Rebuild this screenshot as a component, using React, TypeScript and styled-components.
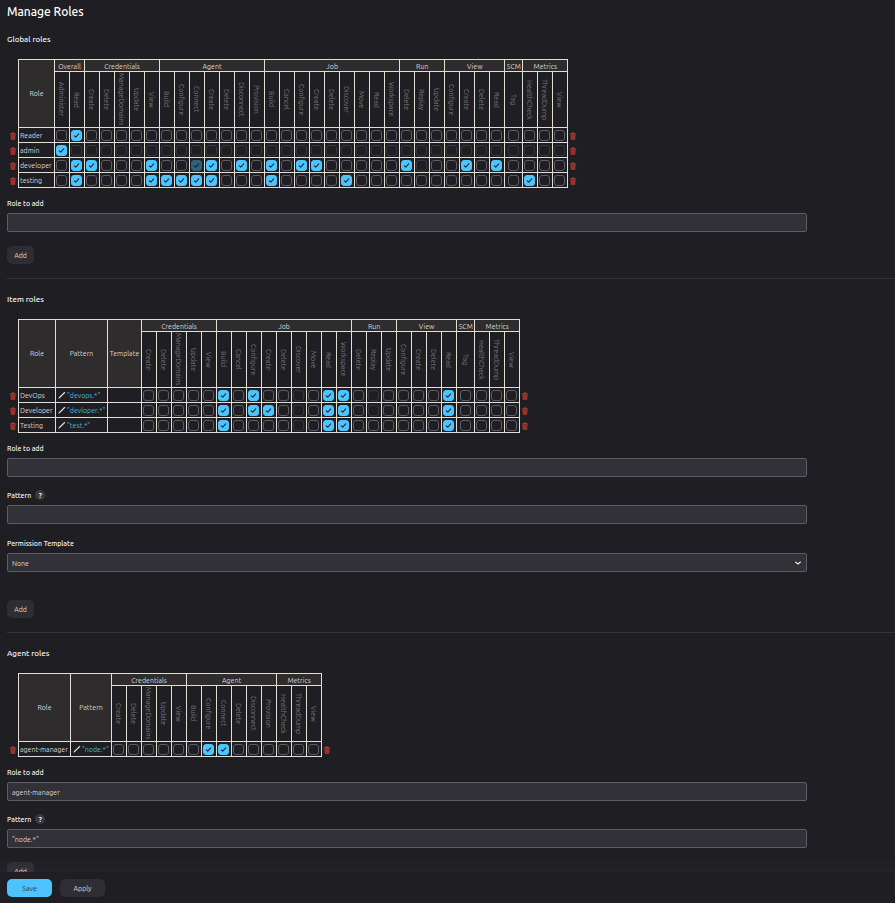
import React, { Fragment, useState } from "react";
import styled, { createGlobalStyle } from "styled-components";

const GlobalStyle = createGlobalStyle`
  *, *::before, *::after { box-sizing: border-box; }
  body {
    margin: 0;
    background: #1f1e23;
    color: #d6d6d6;
    font-family: Ubuntu, "Noto Sans", sans-serif;
    font-size: 7px;
    line-height: 10px;
  }
  button, input, select { font: inherit; color: inherit; margin: 0; }
`;

const Page = styled.div`
  height: 100vh;
  display: flex;
  flex-direction: column;
  overflow: hidden;
`;

const Content = styled.main`
  flex: 1;
  min-height: 0;
  overflow: hidden;
  padding: 4px 0 0 7px;
`;

const Title = styled.h1`
  margin: 0 0 15px;
  font-size: 12px;
  line-height: 16px;
  font-weight: 500;
  color: #fff;
`;

const Section = styled.section`
  & + & {
    margin-top: 14px;
    padding-top: 16px;
    border-top: 1px solid #35343a;
  }
`;

const SectionTitle = styled.h2`
  margin: 0 0 14px;
  font-size: 8px;
  line-height: 10px;
  font-weight: 500;
  color: #f0f0f0;
`;

const RoleTable = styled.table`
  table-layout: fixed;
  width: min-content;
  border-collapse: separate;
  border-spacing: 0;
  white-space: nowrap;
`;

const Col = styled.col<{ $width: number }>`
  width: ${(p) => p.$width}px;
`;

const SideCell = styled.td<{ $ruled?: boolean }>`
  padding: 0;
  border-right: ${(p) => (p.$ruled ? "1px solid #dfdfd3" : "0")};
  padding-left: ${(p) => (p.$ruled ? "1px" : "0")};
`;

const HeadCell = styled.th`
  height: 56px;
  padding: 0 0 2px;
  background: #2e2c2c;
  border: solid #dfdfd3;
  border-width: 1px 1px 1px 0;
  font-weight: 400;
`;

const GroupCell = styled(HeadCell)`
  height: 13px;
  padding-bottom: 0;
  line-height: 10px;
`;

const PermissionCell = styled.th`
  height: 56px;
  padding: 0;
  border: solid #dfdfd3;
  border-width: 0 1px 1px 0;
  font-weight: 400;
  color: #777678;
`;

const VerticalText = styled.span`
  display: block;
  margin: 0 auto;
  writing-mode: vertical-rl;
  line-height: 14px;
  text-align: center;
`;

const BodyCell = styled.td`
  height: 15px;
  padding: 0;
  border: solid #dfdfd3;
  border-width: 0 1px 1px 0;
`;

const NameCell = styled(BodyCell).attrs({ as: "th", scope: "row" })`
  padding-left: 1px;
  text-align: left;
  font-weight: 400;
`;

const TickCell = styled(BodyCell)`
  padding-right: 1px;
`;

const PatternLine = styled.div`
  display: flex;
  align-items: center;
  gap: 1px;
  padding-left: 2px;
`;

const PatternLink = styled.a`
  color: #45b8d8;
  text-decoration: none;
`;

const Tick = styled.input`
  appearance: none;
  display: block;
  width: 11px;
  height: 11px;
  border: 1px solid #5d5b66;
  border-radius: 3px;
  background: transparent center / 11px 11px no-repeat;

  ${TickCell} > & { margin: 0 auto; }

  &:checked {
    border-color: #4dc3ff;
    background-color: #4dc3ff;
    background-image: url("data:image/svg+xml,%3Csvg xmlns='http://www.w3.org/2000/svg' viewBox='0 0 11 11' fill='none' stroke='%231f2a33' stroke-width='1.1' stroke-linecap='round' stroke-linejoin='round'%3E%3Cpath d='M3.3 5.8 4.8 7.2 7.7 3.9'/%3E%3C/svg%3E");
    background-origin: border-box;
  }
  &:disabled { opacity: 0.4; }
`;

const IconButton = styled.button`
  display: flex;
  width: 10px;
  height: 10px;
  padding: 0;
  align-items: center;
  justify-content: center;
  border: 0;
  background: none;
`;

const Field = styled.div<{ $gap: number }>`
  max-width: 800px;
  margin-top: ${(p) => p.$gap}px;
`;

const LabelRow = styled.div`
  display: flex;
  align-items: center;
  gap: 4px;
  height: 10px;
  margin-bottom: 5px;
  font-weight: 500;
  color: #f0f0f0;
`;

const Help = styled.button`
  width: 10px;
  height: 10px;
  padding: 0;
  border: 0;
  border-radius: 5px;
  background: #3a393f;
  font-weight: 700;
  line-height: 10px;
`;

const TextBox = styled.input`
  display: block;
  width: 100%;
  height: 19px;
  padding: 0 4px;
  border: 1px solid #5d5b66;
  border-radius: 2px;
  background: #323137;
`;

const SelectWrap = styled.div`
  display: grid;
  align-items: center;
  & > * { grid-area: 1 / 1; }
  & > svg { justify-self: end; margin-right: 5px; pointer-events: none; }
`;

const Select = styled.select`
  appearance: none;
  width: 100%;
  height: 19px;
  padding: 0 4px;
  border: 1px solid #5d5b66;
  border-radius: 2px;
  background: #323137;
`;

const Button = styled.button<{ $primary?: boolean; $wide?: boolean }>`
  display: block;
  height: 18px;
  padding: 0;
  width: ${(p) => (p.$wide ? 45 : 27)}px;
  border: 0;
  border-radius: 5px;
  background: ${(p) => (p.$primary ? "#4dc3ff" : "#2e2d33")};
  color: ${(p) => (p.$primary ? "#1f3a4a" : "#d6d6d6")};
`;

const AddRow = styled.div<{ $gap: number }>`
  margin-top: ${(p) => p.$gap}px;
`;

const Footer = styled.footer`
  position: relative;
  flex: none;
  display: flex;
  gap: 8px;
  height: 31px;
  padding: 7px;
  background: #1f1e23;

  &::before {
    content: "";
    position: absolute;
    inset: -16px 0 100%;
    background: linear-gradient(transparent, rgba(255, 255, 255, 0.02));
    pointer-events: none;
  }
`;

const Trash = () => (
  <svg width="8" height="8" viewBox="0 0 16 16">
    <path d="M1.5 3.2h3.3l.8-2h4.8l.8 2h3.3v1.7H1.5z" fill="#b83a32" />
    <path d="M2.6 5h10.8l-1 10.8H3.6z" fill="#922e2b" />
    <path d="M5.6 6.6l.4 7M10.4 6.6l-.4 7" stroke="#b83a32" strokeWidth="1" />
  </svg>
);

const Pencil = () => (
  <svg width="8" height="8" viewBox="0 0 16 16">
    <path d="M.8 15.4l1-3L12.9 1.6l1.7 1.7L3.8 14.2z" fill="#dedede" />
  </svg>
);

const Chevron = () => (
  <svg width="8" height="8" viewBox="0 0 16 16" fill="none" stroke="#eee" strokeWidth="2.1" strokeLinecap="round" strokeLinejoin="round">
    <path d="M3 6 8 10l5-4" />
  </svg>
);

type Group = { name: string; items: string[] };
type Role = { name: string; pattern?: string; on: number[]; off?: number[] };

const job = ["Build", "Cancel", "Configure", "Create", "Delete", "Discover", "Move", "Read", "Workspace"];
const credentials: Group = { name: "Credentials", items: ["Create", "Delete", "ManageDomains", "Update", "View"] };
const metrics: Group = { name: "Metrics", items: ["HealthCheck", "ThreadDump", "View"] };
const shared: Group[] = [
  { name: "Job", items: job },
  { name: "Run", items: ["Delete", "Replay", "Update"] },
  { name: "View", items: ["Configure", "Create", "Delete", "Read"] },
  { name: "SCM", items: ["Tag"] },
  metrics,
];

const globalGroups: Group[] = [
  { name: "Overall", items: ["Administer", "Read"] },
  credentials,
  { name: "Agent", items: ["Build", "Configure", "Connect", "Create", "Delete", "Disconnect", "Provision"] },
  ...shared,
];
const itemGroups: Group[] = [credentials, ...shared];
const agentGroups: Group[] = [
  credentials,
  { name: "Agent", items: ["Build", "Configure", "Connect", "Delete", "Disconnect", "Provision"] },
  metrics,
];

const globalRoles: Role[] = [
  { name: "Reader", on: [1] },
  { name: "admin", on: [0], off: Array.from({ length: 33 }, (_, i) => i + 1) },
  { name: "developer", on: [1, 2, 6, 9, 10, 12, 14, 16, 17, 23, 27, 29], off: [9, 24] },
  { name: "testing", on: [1, 6, 7, 8, 9, 10, 14, 19, 31] },
];
const itemRoles: Role[] = [
  { name: "DevOps", pattern: "devops.*", on: [5, 7, 12, 13, 20], off: [10, 15] },
  { name: "Developer", pattern: "devloper.*", on: [5, 7, 8, 12, 13, 20], off: [10, 15] },
  { name: "Testing", pattern: "test.*", on: [5, 12, 13, 20], off: [10] },
];
const agentRoles: Role[] = [{ name: "agent-manager", pattern: "node.*", on: [6, 7] }];

function Matrix({ heads, widths, groups, roles }: { heads: string[]; widths: number[]; groups: Group[]; roles: Role[] }) {
  const permissions = groups.flatMap((g) => g.items.map((item) => ({ group: g.name, item })));
  return (
    <RoleTable>
      <colgroup>
        <Col $width={12} />
        {widths.map((w, i) => <Col key={i} $width={w} />)}
        {permissions.map((p, i) => <Col key={i} $width={p.group === "SCM" ? 18 : 15} />)}
        <Col $width={11} />
      </colgroup>
      <thead>
        <tr>
          <SideCell rowSpan={2} $ruled />
          {heads.map((h) => <HeadCell key={h} rowSpan={2} scope="col">{h}</HeadCell>)}
          {groups.map((g) => <GroupCell key={g.name} colSpan={g.items.length} scope="colgroup">{g.name}</GroupCell>)}
          <SideCell rowSpan={2} />
        </tr>
        <tr>
          {permissions.map((p, i) => (
            <PermissionCell key={i} scope="col"><VerticalText>{p.item}</VerticalText></PermissionCell>
          ))}
        </tr>
      </thead>
      <tbody>
        {roles.map((role) => (
          <tr key={role.name}>
            <SideCell $ruled><IconButton type="button" aria-label={`Delete ${role.name}`}><Trash /></IconButton></SideCell>
            <NameCell>{role.name}</NameCell>
            {role.pattern && (
              <BodyCell>
                <PatternLine><Pencil /><PatternLink href="#pattern">"{role.pattern}"</PatternLink></PatternLine>
              </BodyCell>
            )}
            {heads.includes("Template") && <BodyCell />}
            {permissions.map((p, i) => (
              <TickCell key={i}>
                <Tick
                  type="checkbox"
                  aria-label={`${role.name}: ${p.group} ${p.item}`}
                  defaultChecked={role.on.includes(i)}
                  disabled={role.off?.includes(i)}
                />
              </TickCell>
            ))}
            <SideCell><IconButton type="button" aria-label={`Delete ${role.name}`}><Trash /></IconButton></SideCell>
          </tr>
        ))}
      </tbody>
    </RoleTable>
  );
}

function TextField({ id, label, help, gap, value = "" }: { id: string; label: string; help?: boolean; gap: number; value?: string }) {
  const [text, setText] = useState(value);
  return (
    <Field $gap={gap}>
      <LabelRow>
        <label htmlFor={id}>{label}</label>
        {help && <Help type="button" aria-label={`Help for ${label}`}>?</Help>}
      </LabelRow>
      <TextBox id={id} value={text} onChange={(e) => setText(e.target.value)} />
    </Field>
  );
}

export default function App() {
  return (
    <Fragment>
      <GlobalStyle />
      <Page>
        <Content>
          <Title>Manage Roles</Title>
          <Section>
            <SectionTitle>Global roles</SectionTitle>
            <Matrix heads={["Role"]} widths={[36]} groups={globalGroups} roles={globalRoles} />
            <TextField id="global-role" label="Role to add" gap={10} />
            <AddRow $gap={14}><Button type="button">Add</Button></AddRow>
          </Section>
          <Section>
            <SectionTitle>Item roles</SectionTitle>
            <Matrix heads={["Role", "Pattern", "Template"]} widths={[37, 52, 34]} groups={itemGroups} roles={itemRoles} />
            <TextField id="item-role" label="Role to add" gap={10} />
            <TextField id="item-pattern" label="Pattern" help gap={13} />
            <Field $gap={14}>
              <LabelRow><label htmlFor="template">Permission Template</label></LabelRow>
              <SelectWrap>
                <Select id="template"><option>None</option></Select>
                <Chevron />
              </SelectWrap>
            </Field>
            <AddRow $gap={28}><Button type="button">Add</Button></AddRow>
          </Section>
          <Section>
            <SectionTitle>Agent roles</SectionTitle>
            <Matrix heads={["Role", "Pattern"]} widths={[52, 41]} groups={agentGroups} roles={agentRoles} />
            <TextField id="agent-role" label="Role to add" gap={10} value="agent-manager" />
            <TextField id="agent-pattern" label="Pattern" help gap={13} value={'"node.*"'} />
            <AddRow $gap={14}><Button type="button">Add</Button></AddRow>
          </Section>
        </Content>
        <Footer>
          <Button type="submit" $primary $wide>Save</Button>
          <Button type="button" $wide>Apply</Button>
        </Footer>
      </Page>
    </Fragment>
  );
}
